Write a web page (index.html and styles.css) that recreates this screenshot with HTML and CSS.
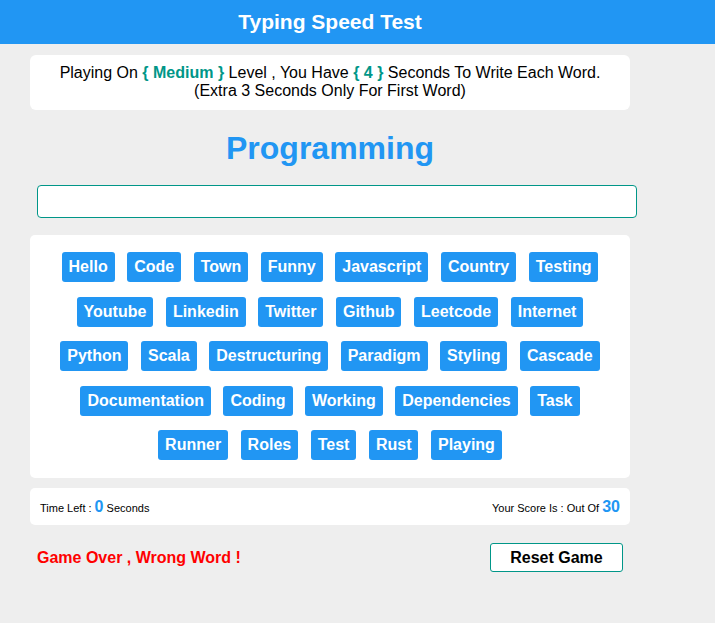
FILE: index.html
```html
<!DOCTYPE html>
<html lang="en">
<head>
<meta charset="utf-8">
<title>Typing Speed Test</title>
<link rel="stylesheet" href="styles.css">
</head>
<body>
<header class="header"><div class="header-inner">Typing Speed Test</div></header>
<main class="game">
  <div class="message">Playing On <span class="accent">{ Medium }</span> Level , You Have <span class="accent">{ 4 }</span> Seconds To Write Each Word.<br>(Extra 3 Seconds Only For First Word)</div>
  <div class="the-word">Programming</div>
  <input class="input" type="text">
  <div class="upcoming-words">
    <span class="word">Hello</span><span class="word">Code</span><span class="word">Town</span><span class="word">Funny</span><span class="word">Javascript</span><span class="word">Country</span><span class="word">Testing</span>
    <span class="word">Youtube</span><span class="word">Linkedin</span><span class="word">Twitter</span><span class="word">Github</span><span class="word">Leetcode</span><span class="word">Internet</span>
    <span class="word">Python</span><span class="word">Scala</span><span class="word">Destructuring</span><span class="word">Paradigm</span><span class="word">Styling</span><span class="word">Cascade</span>
    <span class="word">Documentation</span><span class="word">Coding</span><span class="word">Working</span><span class="word">Dependencies</span><span class="word">Task</span>
    <span class="word">Runner</span><span class="word">Roles</span><span class="word">Test</span><span class="word">Rust</span><span class="word">Playing</span>
  </div>
  <div class="control">
    <div class="time">Time Left : <span class="num">0</span> Seconds</div>
    <div class="score">Your Score Is : Out Of <span class="num">30</span></div>
  </div>
  <div class="finish">
    <span class="bad">Game Over , Wrong Word !</span>
    <button class="reset" type="button">Reset Game</button>
  </div>
</main>
</body>
</html>
```
FILE: styles.css
```css
* { box-sizing: border-box; }
html, body { margin: 0; padding: 0; }
body {
  background: #eeeeee;
  font-family: "Liberation Sans", Arial, sans-serif;
  color: #000;
}
.header {
  background: #2196f3;
  height: 44px;
}
.header-inner {
  width: 600px;
  margin-left: 30px;
  text-align: center;
  color: #fff;
  font-weight: bold;
  font-size: 21px;
  line-height: 44px;
}
.game {
  width: 600px;
  margin-left: 30px;
  padding-top: 11px;
}
.message {
  background: #fff;
  border-radius: 6px;
  text-align: center;
  font-size: 16px;
  line-height: 18px;
  padding: 9px 10px 10px;
}
.accent { color: #009688; font-weight: bold; }
.the-word {
  text-align: center;
  color: #2196f3;
  font-weight: bold;
  font-size: 32px;
  line-height: 40px;
  margin-top: 18px;
}
.input {
  display: block;
  width: 600px;
  height: 33px;
  margin: 17px 0 0 7px;
  border: 1px solid #009688;
  border-radius: 4px;
  background: #fff;
  outline: none;
}
.upcoming-words {
  margin-top: 17px;
  background: #fff;
  border-radius: 5px;
  padding: 17px 20px 18px;
  display: flex;
  flex-wrap: wrap;
  justify-content: center;
  column-gap: 12.5px;
  row-gap: 14.5px;
}
.word {
  background: #2196f3;
  color: #fff;
  font-weight: bold;
  font-size: 16px;
  line-height: 18px;
  padding: 6px 7px;
  border-radius: 3px;
}
.control {
  margin-top: 10px;
  background: #fff;
  border-radius: 5px;
  height: 37px;
  padding: 0 10px;
  display: flex;
  justify-content: space-between;
  align-items: center;
  font-size: 11px;
}
.num {
  color: #2196f3;
  font-weight: bold;
  font-size: 16px;
}
.finish {
  margin-top: 18px;
  padding: 0 7px;
  display: flex;
  justify-content: space-between;
  align-items: center;
}
.bad {
  color: #ff0000;
  font-weight: bold;
  font-size: 16px;
}
.reset {
  width: 133px;
  height: 29px;
  background: #fff;
  border: 1px solid #009688;
  border-radius: 3px;
  font-family: "Liberation Sans", Arial, sans-serif;
  font-weight: bold;
  font-size: 16px;
  color: #000;
  padding: 0;
}
```
